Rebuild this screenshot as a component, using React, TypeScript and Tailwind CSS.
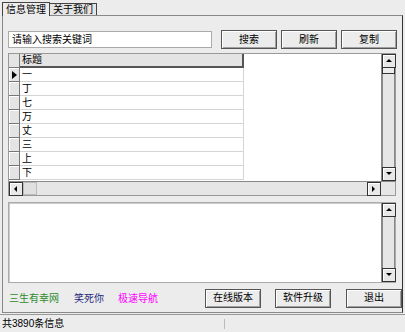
import React from "react";

const rows = ["一", "丁", "七", "万", "丈", "三", "上", "下"];

const font = { fontFamily: '"Liberation Sans", "Noto Sans CJK SC", sans-serif' };

function Btn({ label, className = "" }: { label: string; className?: string }) {
    return (
        <button
            type="button"
            className={`h-[19px] w-[56px] shrink-0 whitespace-nowrap border border-[#555] bg-[#ececec] text-[10px] leading-none text-black shadow-[inset_1px_1px_0_#fff,inset_-1px_-1px_0_#a0a0a0] ${className}`}
        >
            {label}
        </button>
    );
}

function Arrow({ dir }: { dir: "up" | "down" | "left" | "right" }) {
    const pts = {
        up: "1,5 4,2 7,5",
        down: "1,2 4,5 7,2",
        left: "5,1 2,4 5,7",
        right: "2,1 5,4 2,7",
    }[dir];
    return (
        <svg width="8" height="8" viewBox="0 0 8 8">
            <polygon points={pts} fill="#000" />
        </svg>
    );
}

function ScrollBtn({ dir }: { dir: "up" | "down" | "left" | "right" }) {
    return (
        <div className="flex h-[14px] w-[14px] shrink-0 items-center justify-center border border-[#333] bg-[#e8e8e8] shadow-[inset_1px_1px_0_#fff]">
            <Arrow dir={dir} />
        </div>
    );
}

function VScroll({ thumb = false }: { thumb?: boolean }) {
    return (
        <div className="flex w-[14px] flex-col border-l border-[#888] bg-[#e6e6e6]">
            <ScrollBtn dir="up" />
            {thumb && <div className="h-[6px] border-x border-b border-[#333] bg-[#ececec]" />}
            <div className="flex-1 border-x border-[#888] bg-[#e6e6e6]" />
            <ScrollBtn dir="down" />
        </div>
    );
}

export default function App() {
    return (
        <div style={font} className="flex h-[332px] w-[405px] flex-col bg-[#ececec] text-[10px] text-black">
            {/* tabs */}
            <div className="flex h-[15px] items-end pl-[2px]">
                <div className="relative z-10 -mb-px flex h-[14px] items-center border border-b-0 border-[#444] bg-[#ececec] px-[3px] leading-none">
                    信息管理
                </div>
                <div className="flex h-[12px] items-center border border-b-0 border-l-0 border-[#444] bg-[#e4e4e4] px-[3px] leading-none">
                    关于我们
                </div>
            </div>

            {/* panel */}
            <div className="mx-[2px] flex h-[298px] flex-col border border-[#888] border-r-[#333] bg-[#ececec] px-[5px] pt-[14px]">
                <div className="flex h-[19px] items-center">
                    <div className="flex h-[17px] w-[204px] shrink-0 items-center border border-[#aaa] bg-white px-[3px] leading-none">
                        请输入搜索关键词
                    </div>
                    <Btn label="搜索" className="ml-[9px]" />
                    <Btn label="刷新" className="ml-[4px]" />
                    <Btn label="复制" className="ml-[4px]" />
                </div>

                {/* grid */}
                <div className="mt-[4px] flex h-[143px] w-[388px] flex-col border border-[#999] bg-white">
                    <div className="flex flex-1">
                        <div className="flex flex-1 flex-col">
                            <div className="flex h-[14px]">
                                <div className="w-[11px] border-r border-b border-[#777] bg-[#e4e4e4]" />
                                <div className="flex w-[224px] items-center border-r-2 border-b-2 border-[#555] bg-[#e4e4e4] pl-[2px] leading-none">
                                    标题
                                </div>
                            </div>
                            {rows.map((r, i) => (
                                <div key={r} className="flex h-[14px]">
                                    <div className="flex w-[11px] items-center justify-center border-r border-b border-[#777] bg-[#e4e4e4] shadow-[inset_1px_1px_0_#fff]">
                                        {i === 0 && (
                                            <svg width="5" height="8" viewBox="0 0 5 8">
                                                <polygon points="0,0 5,4 0,8" fill="#000" />
                                            </svg>
                                        )}
                                    </div>
                                    <div className="flex w-[224px] items-center border-r border-b border-[#d4d4d4] pl-[2px] leading-none">
                                        {r}
                                    </div>
                                </div>
                            ))}
                        </div>
                        <VScroll thumb />
                    </div>
                    <div className="flex h-[14px] border-t border-[#888]">
                        <div className="flex flex-1 bg-[#e6e6e6]">
                            <ScrollBtn dir="left" />
                            <div className="h-full w-[14px] border border-[#bbb] bg-[#e0e0e0]" />
                            <div className="flex-1" />
                            <ScrollBtn dir="right" />
                        </div>
                        <div className="w-[14px] bg-[#e6e6e6]" />
                    </div>
                </div>

                {/* textarea */}
                <div className="mt-[6px] flex h-[81px] w-[388px] border border-[#aaa] bg-white shadow-[inset_1px_1px_0_#ccc]">
                    <div className="flex-1" />
                    <VScroll />
                </div>

                {/* bottom */}
                <div className="mt-[5px] flex h-[20px] items-center whitespace-nowrap">
                    <span className="ml-[1px] w-[50px] shrink-0 text-[#2e8b2e]">三生有幸网</span>
                    <span className="ml-[15px] w-[30px] shrink-0 text-[#2a2a80]">笑死你</span>
                    <span className="ml-[14px] w-[40px] shrink-0 text-[#ff00ff]">极速导航</span>
                    <Btn label="在线版本" className="ml-[47px]" />
                    <Btn label="软件升级" className="ml-[14px]" />
                    <Btn label="退出" className="ml-[15px]" />
                </div>
            </div>

            {/* status bar */}
            <div className="mt-[1px] flex flex-1 items-center border-t border-[#999] bg-[#ececec]">
                <div className="w-[225px] border-r border-[#bbb] pl-[2px] leading-none">共3890条信息</div>
                <div className="flex-1" />
            </div>
        </div>
    );
}
